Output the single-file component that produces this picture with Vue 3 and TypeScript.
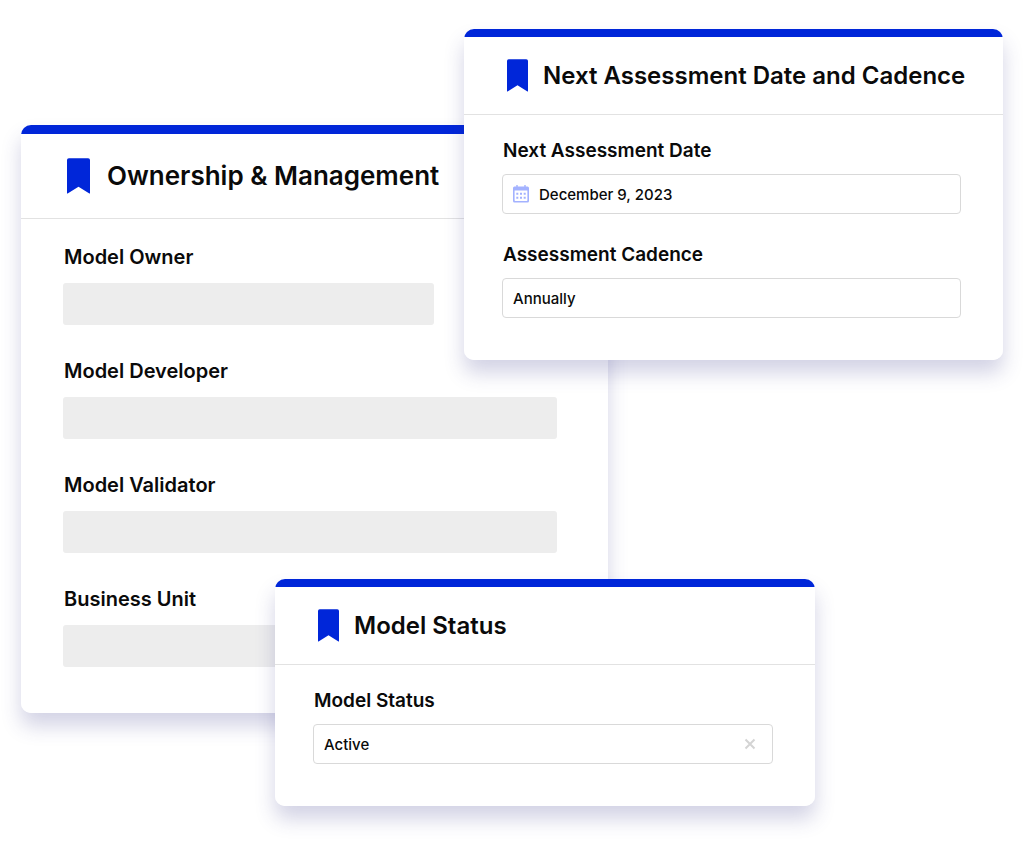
<script setup lang="ts">
import { ref } from 'vue'

interface OwnershipField {
  id: string
  label: string
  short?: boolean
}

const ownershipFields: OwnershipField[] = [
  { id: 'model-owner', label: 'Model Owner', short: true },
  { id: 'model-developer', label: 'Model Developer' },
  { id: 'model-validator', label: 'Model Validator' },
  { id: 'business-unit', label: 'Business Unit' },
]

const nextDate = ref('December 9, 2023')
const cadence = ref('Annually')
const status = ref('Active')
</script>

<template>
  <main class="stage">
    <section class="card card-large ownership">
      <header class="card-header">
        <svg class="bookmark" viewBox="0 0 22 34" aria-hidden="true">
          <path d="M1.8 0H20.2Q22 0 22 1.8V33.2Q22 34.2 21 33.6L11 27.2L1 33.6Q0 34.2 0 33.2V1.8Q0 0 1.8 0Z" />
        </svg>
        <h2>Ownership &amp; Management</h2>
      </header>
      <form class="card-body" @submit.prevent>
        <div v-for="field in ownershipFields" :key="field.id" class="field">
          <label :for="field.id">{{ field.label }}</label>
          <input :id="field.id" class="blank" :class="{ short: field.short }" type="text" readonly />
        </div>
      </form>
    </section>

    <section class="card assessment">
      <header class="card-header">
        <svg class="bookmark" viewBox="0 0 22 34" aria-hidden="true">
          <path d="M1.8 0H20.2Q22 0 22 1.8V33.2Q22 34.2 21 33.6L11 27.2L1 33.6Q0 34.2 0 33.2V1.8Q0 0 1.8 0Z" />
        </svg>
        <h2>Next Assessment Date and Cadence</h2>
      </header>
      <form class="card-body" @submit.prevent>
        <div class="field">
          <label for="next-date">Next Assessment Date</label>
          <div class="control">
            <svg class="calendar" viewBox="0 0 16 18" aria-hidden="true">
              <path
                fill-rule="evenodd"
                d="M3.3 0H4.7V1.5H11.3V0H12.7V1.5H14.5Q16 1.5 16 3V16Q16 17.5 14.5 17.5H1.5Q0 17.5 0 16V3Q0 1.5 1.5 1.5H3.3ZM1.6 5.5V15.2Q1.6 15.9 2.3 15.9H13.7Q14.4 15.9 14.4 15.2V5.5Z"
              />
              <path d="M3.3 7.7h2v2h-2zM7 7.7h2v2H7zM10.7 7.7h2v2h-2zM3.3 11.7h2v2h-2zM7 11.7h2v2H7zM10.7 11.7h2v2h-2z" />
            </svg>
            <input id="next-date" v-model="nextDate" type="text" />
          </div>
        </div>
        <div class="field">
          <label for="cadence">Assessment Cadence</label>
          <div class="control">
            <select id="cadence" v-model="cadence">
              <option>Annually</option>
            </select>
          </div>
        </div>
      </form>
    </section>

    <section class="card status">
      <header class="card-header">
        <svg class="bookmark" viewBox="0 0 22 34" aria-hidden="true">
          <path d="M1.8 0H20.2Q22 0 22 1.8V33.2Q22 34.2 21 33.6L11 27.2L1 33.6Q0 34.2 0 33.2V1.8Q0 0 1.8 0Z" />
        </svg>
        <h2>Model Status</h2>
      </header>
      <form class="card-body" @submit.prevent>
        <div class="field">
          <label for="status">Model Status</label>
          <div class="control">
            <select id="status" v-model="status">
              <option>Active</option>
            </select>
            <button class="clear" type="button" aria-label="Clear status" @click="status = ''">
              <svg viewBox="0 0 12 12" aria-hidden="true">
                <path d="M1.5 1.5L10.5 10.5M10.5 1.5L1.5 10.5" />
              </svg>
            </button>
          </div>
        </div>
      </form>
    </section>
  </main>
</template>

<style>
body {
  margin: 0;
  background: #fff;
}
</style>

<style scoped>
.stage {
  display: grid;
  grid-template-columns:
    minmax(0, 254fr) minmax(0, 189fr) minmax(0, 144fr)
    minmax(0, 207fr) minmax(0, 188fr);
  align-items: start;
  padding: 0 21px 35px;
  font-family: Inter, 'Liberation Sans', sans-serif;
  color: #0a0a0a;
}

/* The three cards share one grid row and overlap by column span. */
.card {
  grid-row: 1;
  box-sizing: border-box;
  border-radius: 10px;
  background: linear-gradient(#0026d9 8px, #fff 8px);
  box-shadow: 0 13px 20px rgba(55, 55, 135, 0.22);
  padding-top: 8px;
}

.ownership {
  grid-column: 1 / 4;
  margin-top: 125px;
}

.assessment {
  grid-column: 3 / 6;
  margin-top: 29px;
}

.status {
  grid-column: 2 / 5;
  margin-top: 579px;
}

.card-header {
  display: flex;
  align-items: center;
  gap: 15px;
  height: 77px;
  padding-left: 43px;
  border-bottom: 1px solid #e2e2e2;
}

.bookmark {
  flex: none;
  width: 21px;
  height: 33px;
  fill: #0026d9;
}

h2 {
  margin: 0;
  font-size: 24px;
  line-height: 32px;
  font-weight: 600;
  white-space: nowrap;
}

.card-body {
  display: flex;
  flex-direction: column;
  gap: 30px;
  padding: 25px 42px 42px 38px;
}

.field {
  display: flex;
  flex-direction: column;
  gap: 12px;
}

label {
  padding-left: 1px;
  font-size: 19px;
  line-height: 22px;
  font-weight: 600;
}

.control {
  display: flex;
  align-items: center;
  box-sizing: border-box;
  height: 40px;
  padding: 0 10px;
  border: 1px solid #d9d9d9;
  border-radius: 4px;
}

.control input,
.control select {
  flex: 1;
  min-width: 0;
  height: 100%;
  margin: 0;
  padding: 0;
  border: 0;
  outline: 0;
  appearance: none;
  background: transparent;
  font: 500 15px/20px Inter, 'Liberation Sans', sans-serif;
  color: inherit;
}

.control select {
  padding-top: 2px;
}

.calendar {
  flex: none;
  width: 16px;
  height: 18px;
  margin-right: 10px;
  fill: #a3b2ff;
}

.clear {
  display: flex;
  padding: 6px;
  border: 0;
  background: none;
}

.clear svg {
  width: 12px;
  height: 12px;
  fill: none;
  stroke: #d4d4d4;
  stroke-width: 2;
}

.card-large {
  background: linear-gradient(#0026d9 9px, #fff 9px);
  padding-top: 9px;
}

.card-large .card-header {
  gap: 17px;
  height: 84px;
  padding-left: 46px;
}

.card-large .bookmark {
  width: 23px;
  height: 36px;
}

.card-large h2 {
  font-size: 26px;
}

.card-large .card-body {
  gap: 34px;
  padding: 26px 51px 46px 42px;
}

.card-large .field {
  gap: 14px;
}

.card-large label {
  font-size: 20px;
  line-height: 24px;
}

.blank {
  box-sizing: border-box;
  width: 100%;
  height: 42px;
  border: 0;
  border-radius: 3px;
  outline: 0;
  background: #ededed;
}

.blank.short {
  width: 75%;
}
</style>
